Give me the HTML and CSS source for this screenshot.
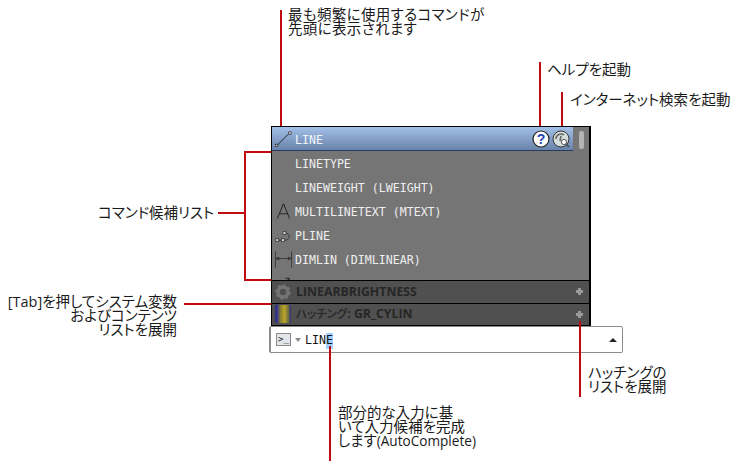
FILE: index.html
```html
<!DOCTYPE html>
<html lang="ja">
<head>
<meta charset="utf-8">
<title>AutoComplete</title>
<link rel="stylesheet" href="styles.css">
</head>
<body>
<main class="canvas">
  <div class="palette">
    <div class="list">
      <div class="items">
        <div class="row row-active">
          <svg class="ico" viewBox="0 0 20 20"><path d="M3 17 16 4" stroke="#222" fill="none"/><rect x="1.5" y="15.5" width="2.5" height="2.5" fill="#ddd" stroke="#222" stroke-width=".7"/><rect x="15.5" y="2.5" width="2.5" height="2.5" fill="#ddd" stroke="#222" stroke-width=".7"/></svg>
          <span class="cmd">LINE</span>
          <span class="tools">
            <svg class="tool" viewBox="0 0 18 18"><circle cx="9" cy="9" r="8" fill="#fff" stroke="#222" stroke-width="1.2"/><text x="9" y="13.5" class="q">?</text></svg>
            <svg class="tool" viewBox="0 0 18 18"><circle cx="9" cy="9" r="8" fill="#d5dcdc" stroke="#333" stroke-width="1"/><path d="M4 9a5 5 0 0 1 8-4M9 6l-1 5" stroke="#666" stroke-width="1.6" fill="none"/><circle cx="12" cy="12" r="2.6" fill="#fff" stroke="#555"/><path d="m14 14 3 3" stroke="#444" stroke-width="1.3"/></svg>
          </span>
        </div>
        <div class="row"><span class="ico"></span><span class="cmd">LINETYPE</span></div>
        <div class="row"><span class="ico"></span><span class="cmd">LINEWEIGHT (LWEIGHT)</span></div>
        <div class="row">
          <svg class="ico" viewBox="0 0 20 20"><path d="M3.5 18 9.7 3h.6L16.500 18M5.500 13h9" stroke="#2a2a2a" stroke-width="1.100" fill="none"/></svg>
          <span class="cmd">MULTILINETEXT (MTEXT)</span>
        </div>
        <div class="row">
          <svg class="ico" viewBox="0 0 20 20"><path d="M5 15.500h6c3 0 5-1.300 5-3.800S14 8 12 8" stroke="#222" fill="none" stroke-dasharray="2 1"/><rect x="9.500" y="6.500" width="3" height="3" fill="#ddd" stroke="#222" stroke-width=".7"/><rect x="2" y="14" width="3" height="3" fill="#ddd" stroke="#222" stroke-width=".7"/><rect x="8" y="14" width="3" height="3" fill="#ddd" stroke="#222" stroke-width=".7"/></svg>
          <span class="cmd">PLINE</span>
        </div>
        <div class="row">
          <svg class="ico" viewBox="0 0 20 20"><path d="M1.500 2v17M18.500 2v17M2 9.500h16M2 9.500l3-1.500v3zM18 9.500l-3-1.500v3z" stroke="#2a2a2a" stroke-width=".8" fill="none"/></svg>
          <span class="cmd">DIMLIN (DIMLINEAR)</span>
        </div>
        <div class="row">
          <svg class="ico" viewBox="0 0 20 20"><path d="M10 12 16 5M12 5h4v4" stroke="#222" fill="none"/></svg>
          <span class="cmd cmd-clipped">DIMLINEAR (DIMLINEAR)</span>
        </div>
      </div>
      <div class="scroll"><div class="thumb"></div></div>
    </div>
    <div class="group">
      <svg class="gico" viewBox="0 0 16 16"><circle cx="8" cy="8" r="5" fill="none" stroke="#747474" stroke-width="3.500"/><circle cx="8" cy="8" r="6.800" fill="none" stroke="#747474" stroke-width="2" stroke-dasharray="2.500 2.800"/></svg>
      <span class="gname">LINEARBRIGHTNESS</span>
      <span class="plus"></span>
    </div>
    <div class="group">
      <span class="swatch"></span>
      <span class="gname"><span class="kana">ハッチング</span>: GR_CYLIN</span>
      <span class="plus"></span>
    </div>
  </div>
  <div class="input">
    <span class="prompt">&gt;_</span>
    <span class="caret-down"></span>
    <span class="typed">LIN<span class="sel">E</span></span>
    <span class="caret-up"></span>
  </div>

  <i class="ln v1"></i><i class="ln v2"></i><i class="ln v3"></i>
  <i class="ln b-h"></i><i class="ln b-v"></i><i class="ln b-t"></i><i class="ln b-b"></i>
  <i class="ln tab"></i><i class="ln plus-ln"></i><i class="ln in-ln"></i>

  <p class="note n1">最も頻繁に使用するコマンドが<br>先頭に表示されます</p>
  <p class="note n2">ヘルプを起動</p>
  <p class="note n3">インターネット検索を起動</p>
  <p class="note n4">コマンド候補リスト</p>
  <p class="note n5">[Tab]を押してシステム変数<br>およびコンテンツ<br>リストを展開</p>
  <p class="note n6">ハッチングの<br>リストを展開</p>
  <p class="note n7">部分的な入力に基<br>いて入力候補を完成<br>します<span class="latin">(AutoComplete)</span></p>
</main>
</body>
</html>
```
FILE: styles.css
```css
* { box-sizing: border-box; }
html, body { margin: 0; background: #fff; }
.canvas { position: relative; width: 740px; height: 470px; overflow: hidden; }

.palette {
  position: absolute; left: 271px; top: 126px; width: 320px; height: 200px;
  border: 1px solid #000; border-width: 1.500px 2px 1px 1px;
  background: #757575; display: flex; flex-direction: column;
}
.list { height: 153px; display: flex; overflow: hidden; }
.items { width: 301px; }
.scroll { flex: 1; position: relative; display: flex; justify-content: center; padding-top: 4px; }
.thumb { width: 5px; height: 18px; background: #b4b4b4; border-radius: 2px; }
.row {
  height: 24px; display: flex; align-items: center; padding-left: 2px; gap: 2px;
  font: 11.600px/1 "DejaVu Sans Mono", monospace; color: #efefef;
}
.cmd { padding-top: 4px; }
.cmd-clipped { padding-top: 7px; }
.row-active {
  background: linear-gradient(#a3c0e8, #6b86ad 95%); border-bottom: 1px solid #27375f;
  color: #f4f7fc; padding-right: 3px;
}
.ico { width: 19px; height: 20px; flex: none; display: block; }
.tools { margin-left: auto; display: flex; gap: 2px; padding-top: 1px; }
.tool { width: 18px; height: 18px; display: block; }
.q { font: bold 14px "Liberation Sans", sans-serif; fill: #2347b0; text-anchor: middle; }

.group {
  height: 22px; flex: 1; display: flex; align-items: center; padding: 0 6px 0 1px;
  background: #505050; border-top: 1px solid #000;
  font: bold 12.300px/1 "Open Sans", "Noto Sans CJK JP", sans-serif; color: #262626;
  font-feature-settings: "palt";
}
.kana { font-size: 11.500px; font-weight: 500; }
.gico { width: 16px; height: 16px; margin: 0 5px 0 2px; flex: none; }
.swatch {
  width: 16px; height: 18px; margin: 0 5px 0 2px; flex: none;
  background: linear-gradient(90deg, #2a2a86, #3c3c86 15%, #8a8030 35%, #b8a428 60%, #6a6a40 85%, #2a2a86);
}
.gname { flex: 1; }
.plus {
  width: 7px; height: 7px; flex: none;
  background:
    linear-gradient(#9a9a9a, #9a9a9a) center / 7px 3px no-repeat,
    linear-gradient(#9a9a9a, #9a9a9a) center / 3px 7px no-repeat;
}

.input {
  position: absolute; left: 269px; top: 326px; width: 354px; height: 27px;
  background: #fff; border: 1px solid #8c8c8c; border-left-width: 2px; border-radius: 2px;
  display: flex; align-items: center; padding: 0 5px 0 5px;
  font: 11.600px/1 "DejaVu Sans Mono", monospace; color: #111;
}
.prompt {
  width: 15px; height: 13px; border: 1px solid #8a8a8a; background: #e2e6ea;
  font: 9px/11px "DejaVu Sans Mono", monospace; text-align: center; color: #222;
}
.caret-down {
  margin: 0 4px 0 4px; border: 3px solid transparent; border-top: 4px solid #8a8a8a; border-bottom: 0;
}
.typed { flex: 1; padding-top: 2px; }
.sel { background: #9fd0ff; display: inline-block; height: 16px; line-height: 15px; }
.caret-up { border: 4px solid transparent; border-bottom: 4px solid #222; border-top: 0; }

.ln { position: absolute; background: #c00a12; display: block; }
.v1 { left: 280px; top: 10px; width: 2px; height: 116px; }
.v2 { left: 539px; top: 62px; width: 2px; height: 64px; }
.v3 { left: 561px; top: 92px; width: 2px; height: 34px; }
.b-h { left: 218px; top: 212px; width: 27px; height: 2px; }
.b-v { left: 244px; top: 151px; width: 2px; height: 130px; }
.b-t { left: 244px; top: 151px; width: 27px; height: 2px; }
.b-b { left: 244px; top: 279px; width: 27px; height: 2px; }
.tab { left: 184px; top: 303px; width: 87px; height: 2px; }
.plus-ln { left: 579px; top: 321px; width: 2px; height: 76px; }
.in-ln { left: 329px; top: 346px; width: 2px; height: 115px; }

.note {
  position: absolute; margin: 0; white-space: nowrap; color: #1a1a1a;
  font: 14.500px/14px "Open Sans", "Noto Sans CJK JP", sans-serif;
  font-feature-settings: "palt";
}
.latin { font-size: 13.600px; }
.n1 { left: 288px; top: 8px; letter-spacing: .35px; }
.n2 { left: 547px; top: 63px; }
.n3 { left: 570px; top: 93px; }
.n4 { left: 98px; top: 206px; }
.n5 { right: 563px; top: 295px; text-align: right; }
.n6 { left: 588px; top: 366px; }
.n7 { left: 338px; top: 406px; }
```
